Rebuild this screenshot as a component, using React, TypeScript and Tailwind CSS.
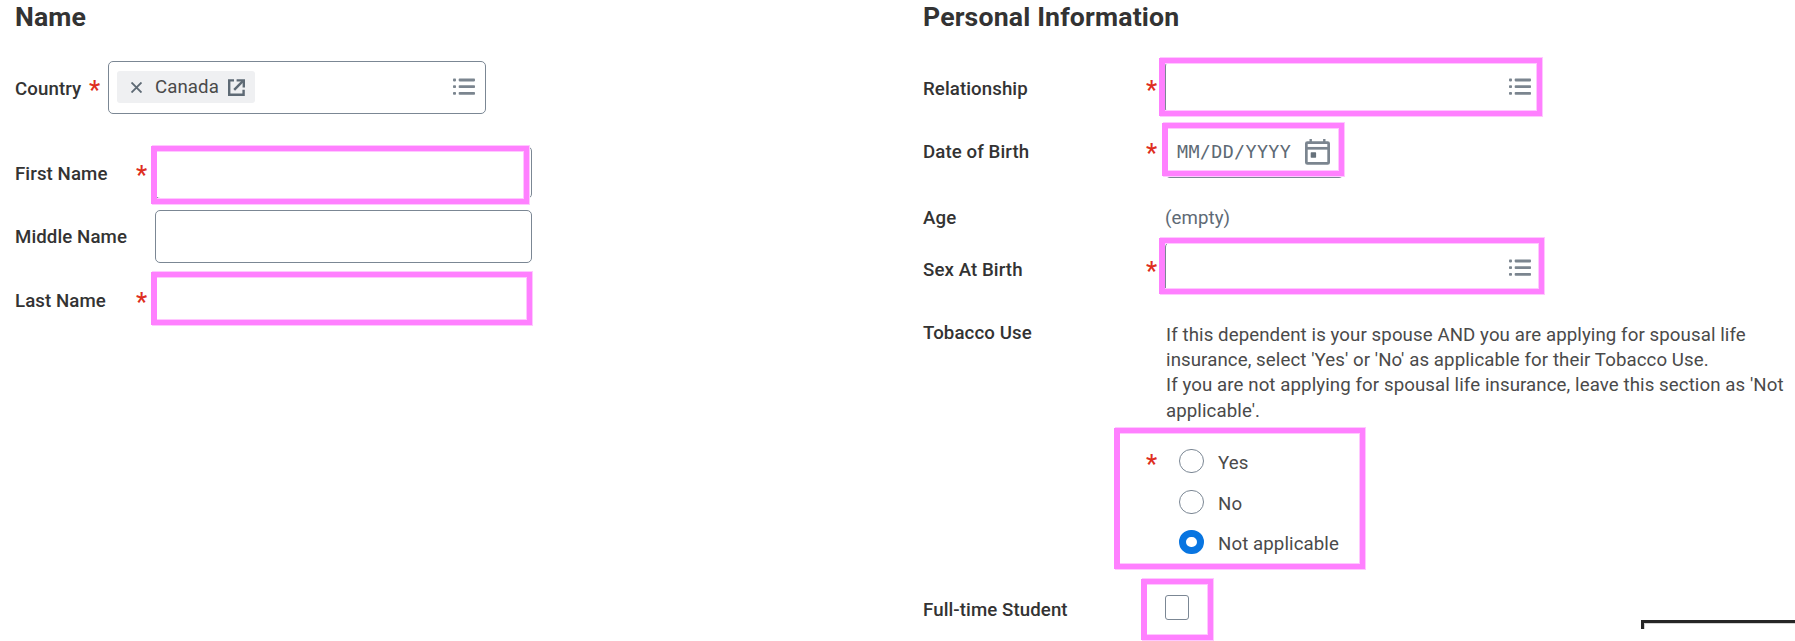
import type { ReactNode } from 'react';

function ListIcon() {
  return (
    <svg width="22" height="18" viewBox="0 0 22 18" fill="#7b858f">
      {[0.6, 7.3, 14].map((y) => (
        <g key={y}>
          <rect x="0" y={y} width="3" height="2.8" rx="0.8" />
          <rect x="5.7" y={y} width="16.3" height="2.8" rx="0.8" />
        </g>
      ))}
    </svg>
  );
}

function CalendarIcon() {
  return (
    <svg width="25" height="26" viewBox="0 0 25 26" fill="none" stroke="#7b858f">
      <path d="M5.7 0v4M19.3 0v4" strokeWidth="2.4" />
      <rect x="1.35" y="3.6" width="22.3" height="20.8" rx="1" strokeWidth="2.7" />
      <path d="M1.3 9.3h22.4" strokeWidth="2.7" />
      <rect x="5.7" y="13.3" width="5.4" height="5.4" rx="0.6" fill="#66717b" stroke="none" />
    </svg>
  );
}

function ExternalIcon() {
  return (
    <svg width="17" height="17" viewBox="0 0 17 17" fill="none" stroke="#5e6a75" strokeWidth="2.4">
      <path d="M6 1.4H1.2v14.4h14.4V10.8" />
      <path d="M6.2 10.8L14.8 2.2" />
      <path d="M8.6 1.4h7.2v7" />
    </svg>
  );
}

function Highlight({ className }: { className: string }) {
  return (
    <div
      className={`absolute border-5 border-l-6 border-[#ff80ff] pointer-events-none shadow-[1px_1px_0_#ffc8ff,1px_-1px_0_#ffc8ff,inset_-1px_-1px_0_#ffc8ff,inset_-1px_1px_0_#ffc8ff] ${className}`}
    />
  );
}

function Row({ label, required, labelWidth, className, children }: {
  label: string;
  required?: boolean;
  labelWidth: string;
  className: string;
  children: ReactNode;
}) {
  return (
    <div className={`flex items-start ${className}`}>
      <div className={`flex justify-between pt-4 shrink-0 font-medium text-[#333] ${labelWidth}`}>
        <span>{label}</span>
        {required && <Star />}
      </div>
      {children}
    </div>
  );
}

function Star() {
  return <span className="w-[11px] mr-2 text-[25px] leading-[28px] font-medium text-[#de2e21]">*</span>;
}

function Field({ width = 'w-[378px]', children }: { width?: string; children?: ReactNode }) {
  return (
    <div className={`relative flex items-center h-[53px] shrink-0 border border-[#7b8794] rounded-[5px] ${width}`}>
      {children}
    </div>
  );
}

const options = ['Yes', 'No', 'Not applicable'];

function App() {
  return (
    <div className="relative flex h-[641px] overflow-hidden bg-white pl-[15px] font-[Roboto,sans-serif] text-[18.67px] leading-6 tracking-[0.09px] text-[#4a4a4a]">
      <section className="w-[908px] shrink-0">
        <h2 className="h-[61px] text-[26.67px] leading-[35px] tracking-[0.15px] font-bold text-[#333]">Name</h2>
        <Row label="Country" required labelWidth="w-[93px]" className="h-[85px]">
          <Field>
            <div className="flex items-center h-8 w-[138px] ml-2 -mt-px pl-3.5 bg-[#eff0f2] rounded-[3px]">
              <svg width="11" height="11" viewBox="0 0 11 11" stroke="#5e6a75" strokeWidth="1.9">
                <path d="M.5 .5l10 10M10.5 .5l-10 10" />
              </svg>
              <span className="ml-[13px] w-[73px]">Canada</span>
              <ExternalIcon />
            </div>
            <div className="ml-auto mr-[10px] -mt-[2px]"><ListIcon /></div>
          </Field>
        </Row>
        <Row label="First Name" required labelWidth="w-[140px]" className="h-16">
          <Field width="w-[377px]">
            <Highlight className="-left-[5px] -top-px w-[378px] h-[58px]" />
          </Field>
        </Row>
        <Row label="Middle Name" labelWidth="w-[140px]" className="h-[63px] [&>div:first-child]:pt-[15px]">
          <Field width="w-[377px]" />
        </Row>
        <Row label="Last Name" required labelWidth="w-[140px]" className="h-[63px]">
          <Field width="w-[377px]">
            <Highlight className="-left-[5px] -top-[2px] w-[381px] h-[53px]" />
          </Field>
        </Row>
      </section>

      <section className="flex-1">
        <h2 className="h-[61px] text-[26.67px] leading-[35px] tracking-[0.15px] font-bold text-[#333]">Personal Information</h2>
        <Row label="Relationship" required labelWidth="w-[242px]" className="h-16">
          <Field width="w-[377px]">
            <Highlight className="-left-[7px] -top-[4px] w-[383px] h-[58px]" />
            <div className="ml-auto mr-[10px] -mt-[2px]"><ListIcon /></div>
          </Field>
        </Row>
        <Row label="Date of Birth" required labelWidth="w-[242px]" className="h-[66px] [&>div:first-child]:pt-[15px]">
          <Field width="w-[179px]">
            <Highlight className="-left-[4px] -top-[3px] w-[182px] h-[53px]" />
            <span className="ml-[11px] w-[128px] font-['DejaVu_Sans_Mono',monospace] text-[18.4px] tracking-[0.34px] text-[#5e6a75]">MM/DD/YYYY</span>
            <CalendarIcon />
          </Field>
        </Row>
        <Row label="Age" labelWidth="w-[242px]" className="h-[51px] [&>div:first-child]:pt-[15px]">
          <span className="pt-[15px] text-[#5e6a75]">(empty)</span>
        </Row>
        <Row label="Sex At Birth" required labelWidth="w-[242px]" className="h-[63px]">
          <Field width="w-[377px]">
            <Highlight className="-left-[7px] -top-[5px] w-[385px] h-[56px]" />
            <div className="ml-auto mr-[10px] -mt-[2px]"><ListIcon /></div>
          </Field>
        </Row>
        <Row label="Tobacco Use" labelWidth="w-[242px]" className="h-[277px]">
          <div className="w-[630px]">
            <p className="h-[122px] pt-[18px] pl-px leading-[25.2px] whitespace-nowrap">
              If this dependent is your spouse AND you are applying for spousal life<br />
              insurance, select 'Yes' or 'No' as applicable for their Tobacco Use.<br />
              If you are not applying for spousal life insurance, leave this section as 'Not<br />
              applicable'.
            </p>
            <div className="relative flex w-[252px] h-[143px] -ml-[51px]">
              <Highlight className="left-0 top-px w-[251px] h-[141px]" />
              <div className="w-[65px] pt-6 pl-8"><Star /></div>
              <div className="pt-[22px]">
                {options.map((option) => (
                  <label key={option} className="flex h-[40.6px]">
                    <span
                      className={
                        option === 'Not applicable'
                          ? 'w-[25px] h-6 rounded-full border-[7px] border-[#0875e1]'
                          : 'w-[25px] h-6 rounded-full border border-[#7b8794]'
                      }
                    />
                    <span className="ml-3.5 pt-[2px]">{option}</span>
                  </label>
                ))}
              </div>
            </div>
          </div>
        </Row>
        <Row label="Full-time Student" labelWidth="w-[242px]" className="h-[59px]">
          <div className="relative mt-[13px] w-6 h-[25px] border border-[#7b8794] rounded-[3px]">
            <Highlight className="-left-[25px] -top-[17px] w-[72px] h-[61px]" />
          </div>
        </Row>
      </section>

      {/* corner of the floating panel below */}
      <div className="absolute left-[1641px] top-[620px] right-0 h-[9px] border-l-3 border-t-3 border-[#262626] shadow-[inset_1px_1px_0_#d4d4d4]" />
    </div>
  );
}

export default App;
